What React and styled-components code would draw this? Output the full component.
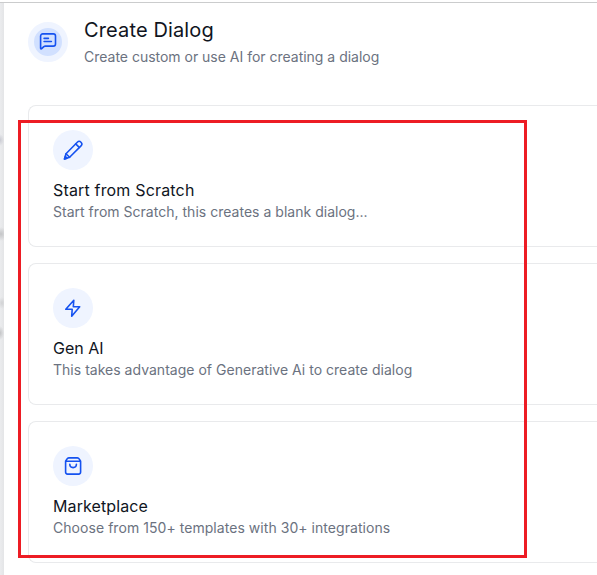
import React from "react";
import styled, { createGlobalStyle } from "styled-components";

const GlobalStyle = createGlobalStyle`
  * { box-sizing: border-box; }
  body { margin: 0; background: #fff; overflow: hidden; font-family: Inter, sans-serif; }
`;

const Page = styled.div`
  position: relative;
  height: 575px;
  display: flex;
  flex-direction: column;
  overflow: hidden;
`;

const TopLine = styled.div`
  flex: none;
  height: 3px;
  background: #fff;
  border-bottom: 1px solid #cbcccd;
`;

const Body = styled.div`
  flex: 1;
  display: flex;
`;

const Backdrop = styled.div`
  flex: none;
  width: 4px;
  background:
    radial-gradient(ellipse 4px 6px at 0 137px, #c9cad2, transparent),
    radial-gradient(ellipse 6px 7px at 1px 231px, #c4c5c7, transparent),
    radial-gradient(ellipse 4px 6px at 2px 300px, #d1d2d4, transparent),
    radial-gradient(ellipse 4px 7px at 0 330px, #c2c3c5, transparent),
    linear-gradient(90deg, #ebecee, #e4e5e7);
`;

const Drawer = styled.main`
  flex: 1;
  min-width: 0;
  padding: 14px 0 0 24px;
  background: #fff;
`;

const Header = styled.header`
  display: flex;
  gap: 16px;
  height: 88px;
`;

const HeaderBadge = styled.div`
  display: grid;
  place-items: center;
  flex: none;
  width: 40px;
  height: 40px;
  margin-top: 5px;
  border: 6px solid #eff4ff;
  border-radius: 50%;
  background: #d1e0ff;
`;

const Title = styled.h1`
  margin: 0;
  color: #10151e;
  font-size: 20px;
  font-weight: 400;
  line-height: 26px;
  letter-spacing: 0.13px;
  white-space: nowrap;
`;

const Text = styled.p`
  margin: 0;
  color: #6b7280;
  font-size: 14px;
  line-height: 20px;
  letter-spacing: ${({ $tracking = 0 }) => $tracking}px;
  white-space: nowrap;
`;

const HeaderText = styled(Text)`
  margin-top: 4px;
`;

const List = styled.div`
  display: flex;
  flex-direction: column;
  gap: 16px;
`;

const Card = styled.section`
  height: 142px;
  padding: 24px;
  border: 1px solid #e9eaec;
  border-right: 0;
  border-radius: 8px 0 0 8px;
`;

const CardBadge = styled.div`
  display: grid;
  place-items: center;
  width: 40px;
  height: 40px;
  border-radius: 50%;
  background: #eff4ff;
`;

const CardTitle = styled.h2`
  margin: 8px 0 0;
  color: #10151e;
  font-size: 16px;
  font-weight: 400;
  line-height: 24px;
  letter-spacing: ${({ $tracking = 0 }) => $tracking}px;
`;

const Highlight = styled.div`
  position: absolute;
  left: 18px;
  top: 120px;
  width: 509px;
  height: 438px;
  border: 3px solid #ed1c24;
  pointer-events: none;
`;

const Icon = styled.svg`
  display: block;
  width: 20px;
  height: 20px;
  fill: none;
  stroke: #1552f0;
  stroke-width: 1.6;
  stroke-linecap: round;
  stroke-linejoin: round;
`;

const ChatIcon = () => (
  <Icon viewBox="0 0 20 20">
    <path d="M4.8 1.9h10.5a2.2 2.2 0 0 1 2.2 2.2v7.8a2.2 2.2 0 0 1-2.2 2.2H7.4c-.7 0-1.1.2-1.6.6l-2.1 2c-.5.4-1.1.2-1.1-.4V4.1a2.2 2.2 0 0 1 2.2-2.2Z" />
    <path d="M6.1 6.4h4.3M6.1 9.5h7.3" />
  </Icon>
);

const PencilIcon = () => (
  <Icon viewBox="0 0 20 20">
    <path d="M1.5 19 3 13.8 14.3 2.2a2.6 2.6 0 0 1 3.7 3.7L6.6 17.3 1.5 19Z" />
    <path d="m3 13.8 3.6 3.5M12.7 3.9l3.5 3.5" />
    <path d="m1.5 19 .8-2.6 1.7 1.8Z" fill="#1552f0" />
  </Icon>
);

const BoltIcon = () => (
  <Icon viewBox="0 0 20 20">
    <path d="M10.8 2.2 2.8 11.3h6.4l-.5 6.9 8-9.4h-6.4l.5-6.6Z" />
  </Icon>
);

const BagIcon = () => (
  <Icon viewBox="0 0 20 20">
    <path d="M2.6 5.2v10.9a2 2 0 0 0 2 2h11a2 2 0 0 0 2-2V5.2M2.6 5.2h15M2.6 5.2l1.3-2.1c.5-.8 1-1.2 1.9-1.2h8.6c.9 0 1.4.4 1.9 1.2l1.3 2.1" />
    <path d="M6.8 8.3a3.3 3.3 0 0 0 6.6 0" />
  </Icon>
);

const options = [
  {
    icon: PencilIcon,
    title: "Start from Scratch",
    titleTracking: 0.17,
    text: "Start from Scratch, this creates a blank dialog...",
    textTracking: 0.02,
  },
  {
    icon: BoltIcon,
    title: "Gen AI",
    text: "This takes advantage of Generative Ai to create dialog",
    textTracking: 0.02,
  },
  {
    icon: BagIcon,
    title: "Marketplace",
    titleTracking: 0.1,
    text: "Choose from 150+ templates with 30+ integrations",
    textTracking: 0.05,
  },
];

export default function App() {
  return (
    <Page>
      <GlobalStyle />
      <TopLine />
      <Body>
        <Backdrop />
        <Drawer>
          <Header>
            <HeaderBadge><ChatIcon /></HeaderBadge>
            <div>
              <Title>Create Dialog</Title>
              <HeaderText $tracking={-0.01}>Create custom or use AI for creating a dialog</HeaderText>
            </div>
          </Header>
          <List>
            {options.map(({ icon: Glyph, title, titleTracking, text, textTracking }) => (
              <Card key={title}>
                <CardBadge><Glyph /></CardBadge>
                <CardTitle $tracking={titleTracking}>{title}</CardTitle>
                <Text $tracking={textTracking}>{text}</Text>
              </Card>
            ))}
          </List>
        </Drawer>
      </Body>
      <Highlight />
    </Page>
  );
}
